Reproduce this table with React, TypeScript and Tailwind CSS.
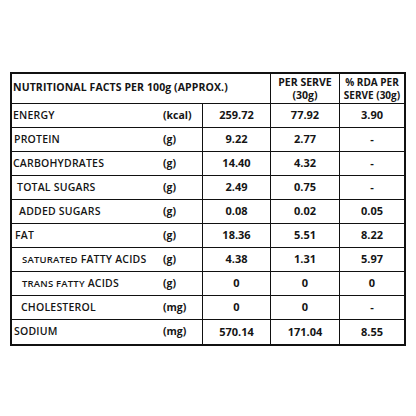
import React from "react";

type Row = { label: React.ReactNode; key: string; indent: string; unit: string; v: string; s: string; r: string };

const rows: Row[] = [
  { key: "e", label: "ENERGY", indent: "pl-[1px]", unit: "(kcal)", v: "259.72", s: "77.92", r: "3.90" },
  { key: "p", label: "PROTEIN", indent: "pl-[2px]", unit: "(g)", v: "9.22", s: "2.77", r: "-" },
  { key: "c", label: "CARBOHYDRATES", indent: "pl-[1px]", unit: "(g)", v: "14.40", s: "4.32", r: "-" },
  { key: "t", label: "TOTAL SUGARS", indent: "pl-[5px]", unit: "(g)", v: "2.49", s: "0.75", r: "-" },
  { key: "a", label: "ADDED SUGARS", indent: "pl-[7px]", unit: "(g)", v: "0.08", s: "0.02", r: "0.05" },
  { key: "f", label: "FAT", indent: "pl-[3px]", unit: "(g)", v: "18.36", s: "5.51", r: "8.22" },
  {
    key: "s",
    label: (
      <>
        <span className="text-[9.5px]">SATURATED</span> FATTY ACIDS
      </>
    ),
    indent: "pl-[10px]",
    unit: "(g)",
    v: "4.38",
    s: "1.31",
    r: "5.97",
  },
  {
    key: "tr",
    label: (
      <>
        <span className="text-[9.5px]">TRANS FATTY</span> ACIDS
      </>
    ),
    indent: "pl-[10px]",
    unit: "(g)",
    v: "0",
    s: "0",
    r: "0",
  },
  { key: "ch", label: "CHOLESTEROL", indent: "pl-[9px]", unit: "(mg)", v: "0", s: "0", r: "-" },
  { key: "so", label: "SODIUM", indent: "pl-[2px]", unit: "(mg)", v: "570.14", s: "171.04", r: "8.55" },
];

export default function App() {
  return (
    <div
      className="w-[416px] h-[416px] bg-white pt-[72px] pl-[10px] text-[#151515]"
      style={{ fontFamily: '"Open Sans", "Liberation Sans", sans-serif' }}
    >
      <div className="w-[396px] border-2 border-[#111] flex flex-col">
        {/* header */}
        <div className="flex h-[30px] border-b-[1.5px] border-[#111]">
          <div className="w-[258px] flex items-center pl-[1px] pb-[2px] text-[10.5px] font-bold tracking-[0.1px]">
            NUTRITIONAL FACTS PER 100g (APPROX.)
          </div>
          <div className="w-[69px] border-l-[1.5px] border-[#111] flex flex-col items-center justify-center text-[10.5px] font-bold leading-[13px]">
            <span className="leading-[13px]">PER SERVE</span>
            <span className="leading-[13px]">(30g)</span>
          </div>
          <div className="flex-1 border-l-[1.5px] border-[#111] flex flex-col items-center justify-center text-[10px] font-bold leading-[13px]">
            <span className="leading-[13px]">% RDA PER</span>
            <span className="leading-[13px]">SERVE (30g)</span>
          </div>
        </div>
        {rows.map((r, i) => (
          <div
            key={r.key}
            className={`flex h-[24px] ${i < rows.length - 1 ? "border-b-[1.5px] border-[#111]" : ""}`}
          >
            <div className={`w-[151px] flex items-center text-[10.5px] tracking-[0.2px] font-semibold whitespace-nowrap ${r.indent}`}>
              <span>{r.label}</span>
            </div>
            <div className="w-[39px] flex items-center text-[10.5px] font-bold">{r.unit}</div>
            <div className="w-[68px] border-l-[1.5px] border-[#111] flex items-center justify-center text-[11px] font-bold">
              {r.v}
            </div>
            <div className="w-[69px] border-l-[1.5px] border-[#111] flex items-center justify-center text-[11px] font-bold">
              {r.s}
            </div>
            <div className="flex-1 border-l-[1.5px] border-[#111] flex items-center justify-center text-[11px] font-bold">
              {r.r}
            </div>
          </div>
        ))}
      </div>
    </div>
  );
}
